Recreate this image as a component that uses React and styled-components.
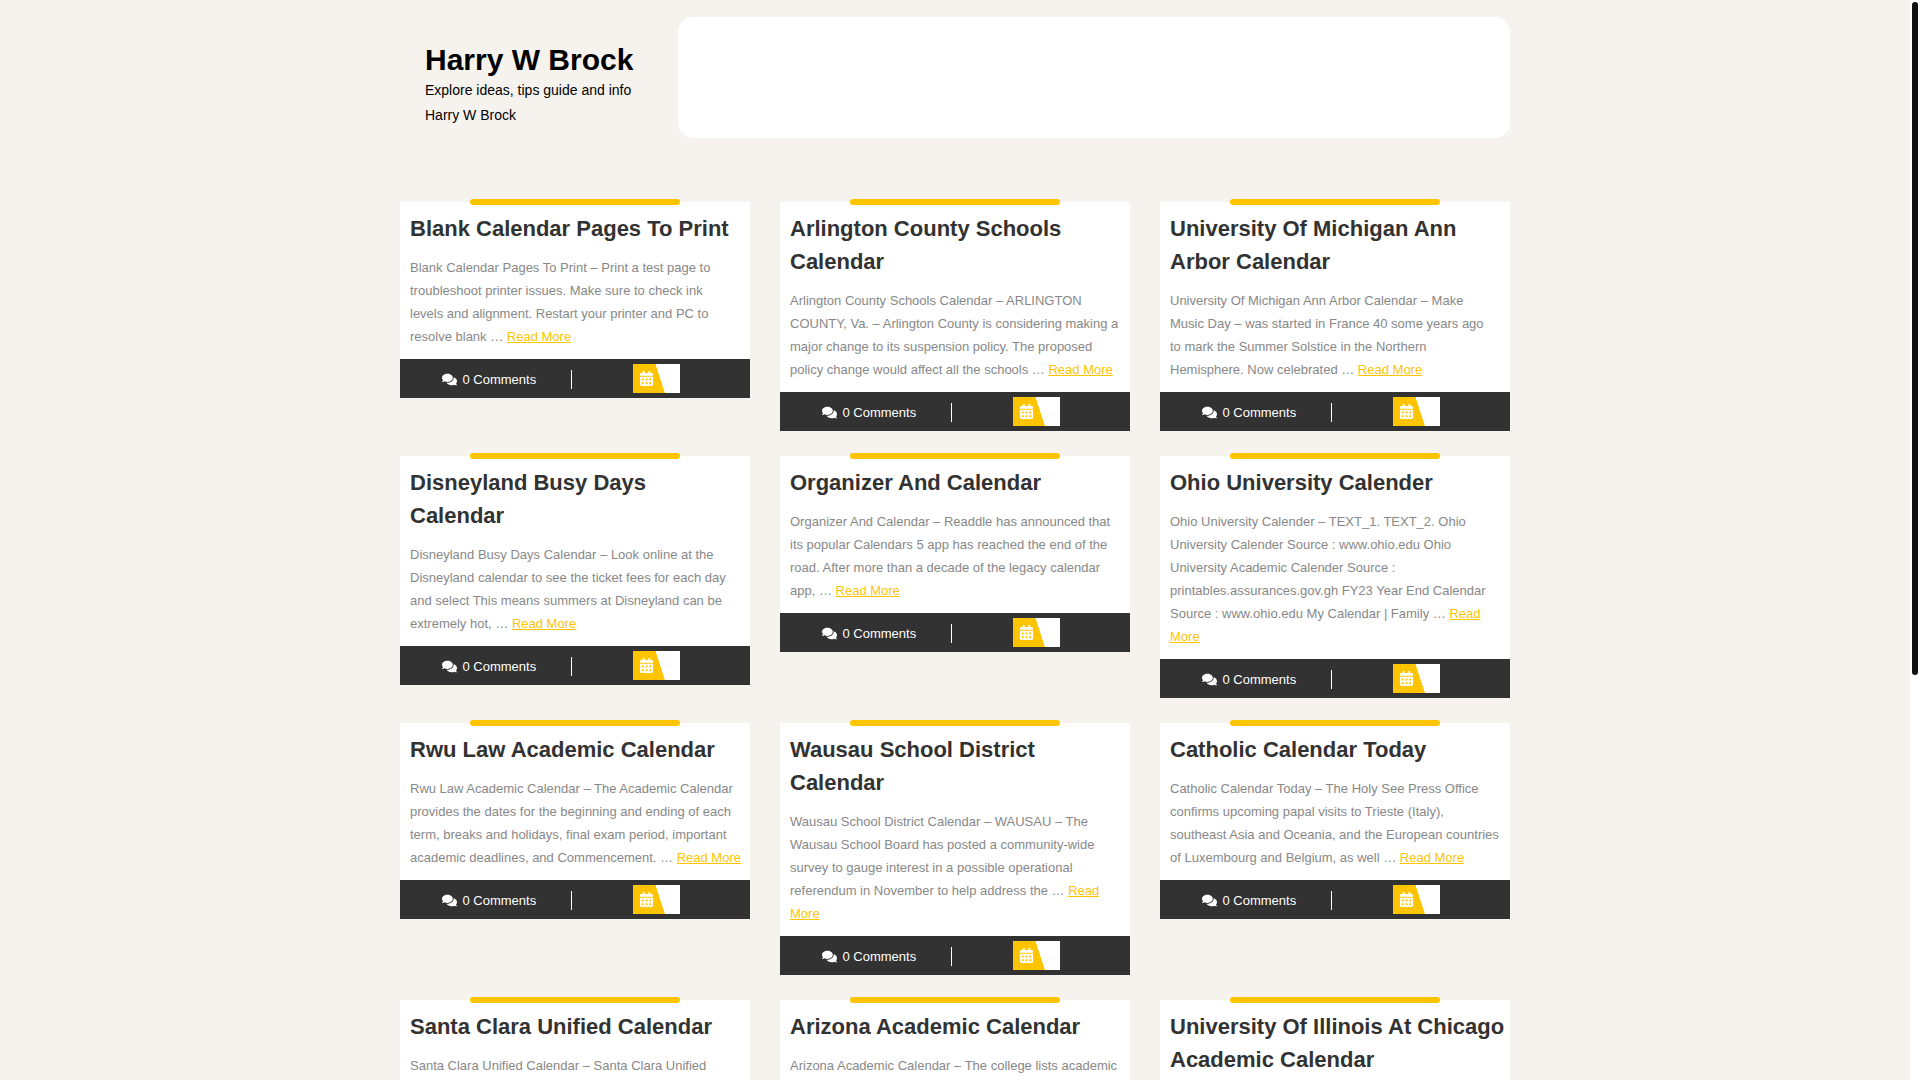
import React from "react";
import styled, { createGlobalStyle } from "styled-components";
import { FaComments, FaCalendarAlt } from "react-icons/fa";

const GlobalStyle = createGlobalStyle`
  *, *::before, *::after { box-sizing: border-box; }
  body {
    margin: 0;
    background: #f6f3ee;
    color: #000;
    font-family: "Liberation Sans", Arial, sans-serif;
    font-size: 14px;
    line-height: 25px;
  }
`;

const Shell = styled.div`
  display: flex;
  height: 100vh;
  overflow: hidden;
`;

const Page = styled.div`
  flex: 1;
  min-width: 0;
  overflow-y: auto;
  scrollbar-width: none;
`;

const ScrollTrack = styled.div`
  flex: none;
  width: 10px;
  padding: 2px;
  background: #fff;
`;

const ScrollThumb = styled.div`
  width: 6px;
  height: 62.5%;
  border-radius: 3px;
  background: #111;
`;

const Container = styled.div`
  max-width: 1110px;
  margin: 0 auto;
`;

const Header = styled.header`
  display: grid;
  grid-template-columns: 1fr 3fr;
  padding: 17px 0 64px;
`;

const Brand = styled.div`
  padding: 25px 25px 0;
`;

const SiteTitle = styled.h1`
  margin: 0;
  font-size: 30px;
  line-height: 36px;
  white-space: nowrap;

  a { color: inherit; text-decoration: none; }
`;

const Tagline = styled.p`
  margin: 0;
`;

const MenuPanel = styled.nav`
  min-height: 121px;
  border-radius: 15px;
  background: #fff;
`;

const PostGrid = styled.main`
  display: grid;
  grid-template-columns: repeat(3, minmax(0, 1fr));
  align-items: start;
  gap: 25px 30px;
`;

const Card = styled.article`
  position: relative;
  background: #fff;

  &::before {
    content: "";
    position: absolute;
    top: -3px;
    left: 20%;
    width: 60%;
    height: 6px;
    border-radius: 3px;
    background: #ffc400;
  }
`;

const CardBody = styled.div`
  padding: 10px 10px 11px;
`;

const PostTitle = styled.h2`
  margin: 0 0 11px;
  font-size: 22px;
  line-height: 33px;
  white-space: pre;

  a { color: #323232; text-decoration: none; }
`;

const Excerpt = styled.p`
  margin: 0;
  color: #888;
  font-size: 13px;
  line-height: 23px;
  white-space: pre;
`;

const ReadMore = styled.a`
  color: #ffc400;
`;

const CardFooter = styled.footer`
  display: grid;
  grid-template-columns: 49fr 51fr;
  align-items: center;
  height: 39px;
  padding: 0 8px;
  background: #323232;
  color: #fff;
  font-size: 13px;
`;

const Comments = styled.span`
  display: flex;
  align-items: center;
  justify-content: center;
  gap: 5px;
  height: 19px;
  margin-top: 2px;
  border-right: 1px solid #fff;
`;

const DateBadge = styled.time`
  display: flex;
  align-items: center;
  justify-self: center;
  width: 47px;
  height: 29px;
  padding-left: 6px;
  background: linear-gradient(72deg, #ffc400 56%, #fff 57%);
`;

const posts = [
  {
    title: "Blank Calendar Pages To Print",
    text: "Blank Calendar Pages To Print – Print a test page to\ntroubleshoot printer issues. Make sure to check ink\nlevels and alignment. Restart your printer and PC to\nresolve blank … ",
    more: "Read More",
  },
  {
    title: "Arlington County Schools\nCalendar",
    text: "Arlington County Schools Calendar – ARLINGTON\nCOUNTY, Va. – Arlington County is considering making a\nmajor change to its suspension policy. The proposed\npolicy change would affect all the schools … ",
    more: "Read More",
  },
  {
    title: "University Of Michigan Ann\nArbor Calendar",
    text: "University Of Michigan Ann Arbor Calendar – Make\nMusic Day – was started in France 40 some years ago\nto mark the Summer Solstice in the Northern\nHemisphere. Now celebrated … ",
    more: "Read More",
  },
  {
    title: "Disneyland Busy Days\nCalendar",
    text: "Disneyland Busy Days Calendar – Look online at the\nDisneyland calendar to see the ticket fees for each day\nand select This means summers at Disneyland can be\nextremely hot, … ",
    more: "Read More",
  },
  {
    title: "Organizer And Calendar",
    text: "Organizer And Calendar – Readdle has announced that\nits popular Calendars 5 app has reached the end of the\nroad. After more than a decade of the legacy calendar\napp, … ",
    more: "Read More",
  },
  {
    title: "Ohio University Calender",
    text: "Ohio University Calender – TEXT_1. TEXT_2. Ohio\nUniversity Calender Source : www.ohio.edu Ohio\nUniversity Academic Calender Source :\nprintables.assurances.gov.gh FY23 Year End Calendar\nSource : www.ohio.edu My Calendar | Family … ",
    more: "Read\nMore",
  },
  {
    title: "Rwu Law Academic Calendar",
    text: "Rwu Law Academic Calendar – The Academic Calendar\nprovides the dates for the beginning and ending of each\nterm, breaks and holidays, final exam period, important\nacademic deadlines, and Commencement. … ",
    more: "Read More",
  },
  {
    title: "Wausau School District\nCalendar",
    text: "Wausau School District Calendar – WAUSAU – The\nWausau School Board has posted a community-wide\nsurvey to gauge interest in a possible operational\nreferendum in November to help address the … ",
    more: "Read\nMore",
  },
  {
    title: "Catholic Calendar Today",
    text: "Catholic Calendar Today – The Holy See Press Office\nconfirms upcoming papal visits to Trieste (Italy),\nsoutheast Asia and Oceania, and the European countries\nof Luxembourg and Belgium, as well … ",
    more: "Read More",
  },
  {
    title: "Santa Clara Unified Calendar",
    text: "Santa Clara Unified Calendar – Santa Clara Unified",
  },
  {
    title: "Arizona Academic Calendar",
    text: "Arizona Academic Calendar – The college lists academic",
  },
  { title: "University Of Illinois At Chicago\nAcademic Calendar" },
];

function PostCard({ title, text, more }) {
  return (
    <Card>
      <CardBody>
        <PostTitle><a href="#post">{title}</a></PostTitle>
        {text && (
          <Excerpt>
            {text}
            {more && <ReadMore href="#post">{more}</ReadMore>}
          </Excerpt>
        )}
      </CardBody>
      {more && (
        <CardFooter>
          <Comments><FaComments size={15} />0 Comments</Comments>
          <DateBadge><FaCalendarAlt size={15} /></DateBadge>
        </CardFooter>
      )}
    </Card>
  );
}

export default function App() {
  return (
    <>
      <GlobalStyle />
      <Shell>
        <Page>
          <Container>
            <Header>
              <Brand>
                <SiteTitle><a href="#home">Harry W Brock</a></SiteTitle>
                <Tagline>Explore ideas, tips guide and info Harry W Brock</Tagline>
              </Brand>
              <MenuPanel />
            </Header>
            <PostGrid>
              {posts.map((post) => <PostCard key={post.title} {...post} />)}
            </PostGrid>
          </Container>
        </Page>
        <ScrollTrack><ScrollThumb /></ScrollTrack>
      </Shell>
    </>
  );
}
